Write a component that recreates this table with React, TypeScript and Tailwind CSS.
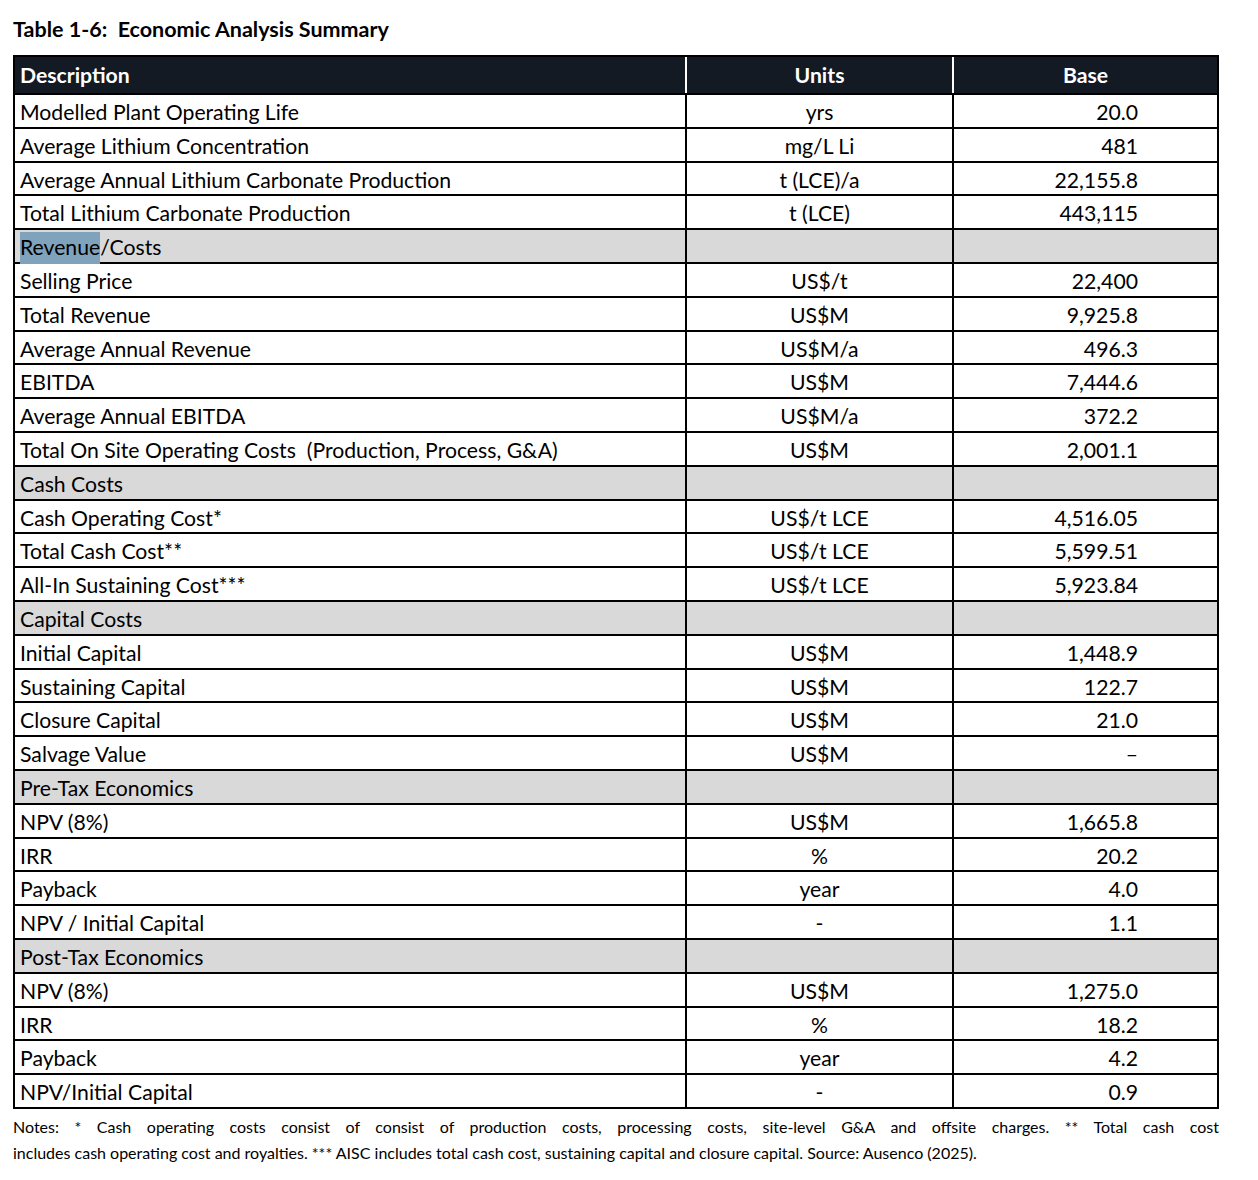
import React from "react";

type Row = { d: React.ReactNode; u?: string; v?: string; s?: boolean };

const rows: Row[] = [
  { d: "Modelled Plant Operating Life", u: "yrs", v: "20.0" },
  { d: "Average Lithium Concentration", u: "mg/L Li", v: "481" },
  { d: "Average Annual Lithium Carbonate Production", u: "t (LCE)/a", v: "22,155.8" },
  { d: "Total Lithium Carbonate Production", u: "t (LCE)", v: "443,115" },
  {
    d: (
      <>
        <span className="bg-[#7fa2bd]">Revenue</span>/Costs
      </>
    ),
    s: true,
  },
  { d: "Selling Price", u: "US$/t", v: "22,400" },
  { d: "Total Revenue", u: "US$M", v: "9,925.8" },
  { d: "Average Annual Revenue", u: "US$M/a", v: "496.3" },
  { d: "EBITDA", u: "US$M", v: "7,444.6" },
  { d: "Average Annual EBITDA", u: "US$M/a", v: "372.2" },
  { d: "Total On Site Operating Costs\u00a0 (Production, Process, G&A)", u: "US$M", v: "2,001.1" },
  { d: "Cash Costs", s: true },
  { d: "Cash Operating Cost*", u: "US$/t LCE", v: "4,516.05" },
  { d: "Total Cash Cost**", u: "US$/t LCE", v: "5,599.51" },
  { d: "All-In Sustaining Cost***", u: "US$/t LCE", v: "5,923.84" },
  { d: "Capital Costs", s: true },
  { d: "Initial Capital", u: "US$M", v: "1,448.9" },
  { d: "Sustaining Capital", u: "US$M", v: "122.7" },
  { d: "Closure Capital", u: "US$M", v: "21.0" },
  { d: "Salvage Value", u: "US$M", v: "\u2013" },
  { d: "Pre-Tax Economics", s: true },
  { d: "NPV (8%)", u: "US$M", v: "1,665.8" },
  { d: "IRR", u: "%", v: "20.2" },
  { d: "Payback", u: "year", v: "4.0" },
  { d: "NPV / Initial Capital", u: "-", v: "1.1" },
  { d: "Post-Tax Economics", s: true },
  { d: "NPV (8%)", u: "US$M", v: "1,275.0" },
  { d: "IRR", u: "%", v: "18.2" },
  { d: "Payback", u: "year", v: "4.2" },
  { d: "NPV/Initial Capital", u: "-", v: "0.9" },
];

export default function App() {
  return (
    <div
      className="w-[1258px] h-[1180px] bg-white text-black"
      style={{ fontFamily: "Lato, 'Open Sans', sans-serif" }}
    >
      <div className="pl-[13px] pt-[16px]">
        <div className="text-[21.5px] font-bold leading-[26px] h-[39px]">
          Table 1-6:&nbsp; Economic Analysis Summary
        </div>
        <div className="w-[1206px] border-2 border-black">
          <div className="grid grid-cols-[670px_267px_265px] h-[36px] bg-[#131a23] text-white font-bold text-[21.2px] items-center">
            <div className="pl-[5px] h-full flex items-center pt-[1px]">Description</div>
            <div className="border-l-2 border-white h-full flex items-center justify-center pt-[1px]">Units</div>
            <div className="border-l-2 border-white h-full flex items-center justify-center pt-[1px]">Base</div>
          </div>
          {rows.map((r, i) => (
            <div
              key={i}
              className={`grid grid-cols-[670px_267px_265px] h-[33.8px] border-t-2 border-black text-[21.2px] ${
                r.s ? "bg-[#d9d9d9]" : "bg-white"
              }`}
            >
              <div className="pl-[5px] flex items-center pt-[2px] whitespace-nowrap">{r.d}</div>
              <div className="border-l-2 border-black flex items-center justify-center pt-[2px]">{r.u ?? ""}</div>
              <div className="border-l-2 border-black flex items-center justify-end pr-[79px] pt-[2px]">{r.v ?? ""}</div>
            </div>
          ))}
        </div>
        <div className="w-[1206px] mt-[5px] text-[16px] leading-[26px]">
          <div className="text-justify [text-align-last:justify]">
            Notes: * Cash operating costs consist of consist of production costs, processing costs, site-level G&amp;A and offsite charges. ** Total cash cost
          </div>
          <div>
            includes cash operating cost and royalties. *** AISC includes total cash cost, sustaining capital and closure capital. Source: Ausenco (2025).
          </div>
        </div>
      </div>
    </div>
  );
}
